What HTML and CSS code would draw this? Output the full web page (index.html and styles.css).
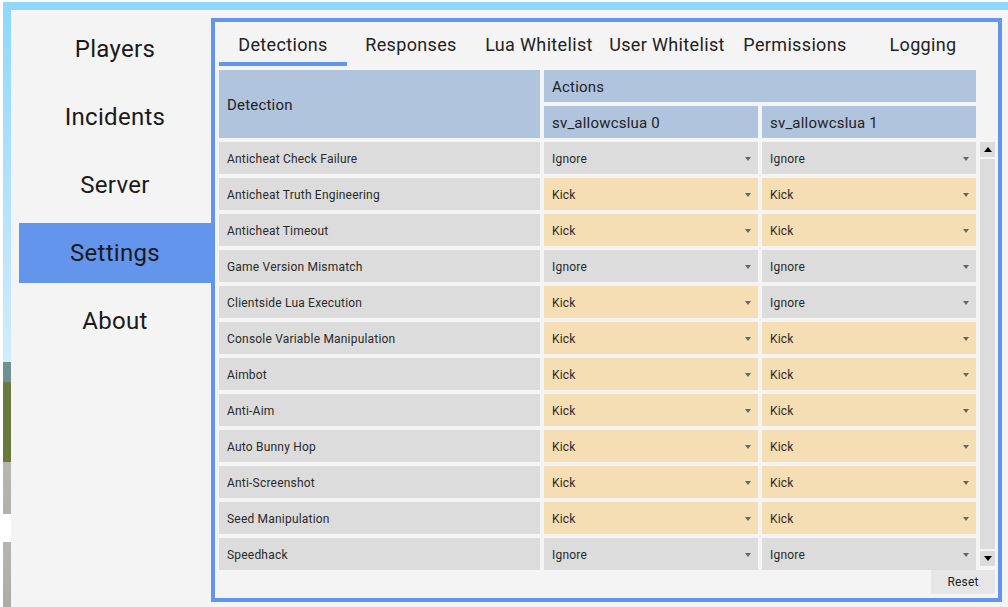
FILE: index.html
```html
<!DOCTYPE html>
<html lang="en">
<head>
    <meta charset="UTF-8">
    <title>Settings</title>
    <link rel="stylesheet" href="styles.css">
</head>
<body>
<div class='frame'>
    <div class='sky'></div>
    <div class='frameBody'>
        <div class='scenery'></div>
        <div class='app'>
            <ul class='nav'>
                <li>Players</li>
                <li>Incidents</li>
                <li>Server</li>
                <li class='active'>Settings</li>
                <li>About</li>
            </ul>
            <div class='panel'>
                <ul class='tabs'>
                    <li class='active'>Detections</li>
                    <li>Responses</li>
                    <li>Lua Whitelist</li>
                    <li>User Whitelist</li>
                    <li>Permissions</li>
                    <li>Logging</li>
                </ul>
                <div class='head'>
                    <div class='hDetection'>Detection</div>
                    <div class='hActions'>Actions</div>
                    <div>sv_allowcslua 0</div>
                    <div>sv_allowcslua 1</div>
                </div>
                <div class='list'>
                    <div class='rows' id='rows'></div>
                    <div class='scroll'>
                        <div class='scrollBtn'><span class='up'></span></div>
                        <div class='scrollTrack'></div>
                        <div class='scrollBtn'><span class='down'></span></div>
                    </div>
                </div>
                <div class='foot'>
                    <a href="javascript:;" class='reset'>Reset</a>
                </div>
            </div>
        </div>
    </div>
</div>

<script>
    var data = [
        ["Anticheat Check Failure","Ignore","Ignore"],
        ["Anticheat Truth Engineering","Kick","Kick"],
        ["Anticheat Timeout","Kick","Kick"],
        ["Game Version Mismatch","Ignore","Ignore"],
        ["Clientside Lua Execution","Kick","Ignore"],
        ["Console Variable Manipulation","Kick","Kick"],
        ["Aimbot","Kick","Kick"],
        ["Anti-Aim","Kick","Kick"],
        ["Auto Bunny Hop","Kick","Kick"],
        ["Anti-Screenshot","Kick","Kick"],
        ["Seed Manipulation","Kick","Kick"],
        ["Speedhack","Ignore","Ignore"]
    ];
    var str = "";
    for(var i = 0,len = data.length;i<len;i++){
        var cur = data[i];
        str += "<div class='name'>"+cur[0]+"</div>";
        for(var k = 1;k<3;k++){
            var cls = cur[k] === "Kick" ? "pick kick" : "pick";
            str += "<div class='"+cls+"'>"+cur[k]+"<span class='arrow'></span></div>";
        }
    }
    document.getElementById('rows').innerHTML = str;
</script>
</body>
</html>
```

FILE: styles.css
```css
*{
    margin:0;
    padding:0;
    box-sizing:border-box;
}
ul,li{
    list-style:none;
}
a{
    text-decoration:none;
    color:inherit;
}
body{
    width:1008px;
    height:607px;
    overflow:hidden;
    background:#fff;
    font-family:Roboto,"Liberation Sans",sans-serif;
    color:#222;
    letter-spacing:0.2px;
}
.frame{
    padding:2px 0 0 3px;
    height:607px;
}
.sky{
    height:8px;
    background:#8fd8fc;
}
.frameBody{
    display:flex;
    height:597px;
}
.scenery{
    width:8px;
    background:linear-gradient(to bottom,
        #8fd8fc 0, #d2ecfa 352px,
        #6f8f90 352px, #6f8f90 372px,
        #6b7a3e 372px, #69783c 452px,
        #b9b6ae 452px, #b3b0a8 504px,
        #fff 504px, #fff 532px,
        #b8b5ad 532px, #aeaba3 597px);
}
.app{
    flex:1;
    display:flex;
    background:#f4f4f4;
}

/* left menu */
.nav{
    width:200px;
    padding:9px 0 0 8px;
    display:flex;
    flex-direction:column;
    gap:8px;
}
.nav li{
    height:60px;
    line-height:60px;
    text-align:center;
    font-size:24px;
    color:#1a1a1a;
    letter-spacing:0.3px;
}
.nav li.active{
    background:#6495ed;
}

/* settings panel */
.panel{
    margin-top:8px;
    width:791px;
    height:584px;
    border:4px solid #6495ed;
    padding:0 3px 0 4px;
    display:flex;
    flex-direction:column;
}
.tabs{
    display:flex;
    height:44px;
    margin-bottom:4px;
}
.tabs li{
    width:128px;
    padding-top:6px;
    line-height:34px;
    text-align:center;
    font-size:18px;
    letter-spacing:0.35px;
    border-bottom:4px solid transparent;
}
.tabs li.active{
    border-bottom-color:#6495ed;
}
.head{
    width:757px;
    display:grid;
    grid-template-columns:321px 214px 214px;
    grid-template-rows:32px 32px;
    gap:4px;
    margin-bottom:4px;
}
.head div{
    background:#b0c4de;
    font-size:15px;
    line-height:32px;
    padding:1px 0 0 8px;
}
.head .hDetection{
    grid-row:1 / 3;
    display:flex;
    align-items:center;
}
.head .hActions{
    grid-column:2 / 4;
}
.list{
    display:flex;
    height:428px;
}
.rows{
    width:757px;
    display:grid;
    grid-template-columns:321px 214px 214px;
    grid-auto-rows:32px;
    gap:4px;
    font-size:12px;
    color:#2a2a2a;
}
.rows div{
    background:#dcdcdc;
    line-height:32px;
    padding:1px 0 0 8px;
}
.rows .pick{
    position:relative;
}
.rows .kick{
    background:#f5deb3;
}
.arrow{
    position:absolute;
    right:7px;
    top:15px;
    border-left:3.5px solid transparent;
    border-right:3.5px solid transparent;
    border-top:4px solid #666;
}
.scroll{
    width:15px;
    margin-left:4px;
    height:424px;
    display:flex;
    flex-direction:column;
    gap:2px;
}
.scrollBtn{
    height:15px;
    background:#dcdcdc;
    display:flex;
    align-items:center;
    justify-content:center;
}
.scrollTrack{
    flex:1;
    background:#dcdcdc;
}
.up{
    border-left:4px solid transparent;
    border-right:4px solid transparent;
    border-bottom:5px solid #000;
}
.down{
    border-left:4px solid transparent;
    border-right:4px solid transparent;
    border-top:5px solid #000;
}
.foot{
    display:flex;
    justify-content:flex-end;
}
.reset{
    width:64px;
    height:24px;
    line-height:24px;
    text-align:center;
    font-size:12px;
    background:#e6e6e6;
}
```
